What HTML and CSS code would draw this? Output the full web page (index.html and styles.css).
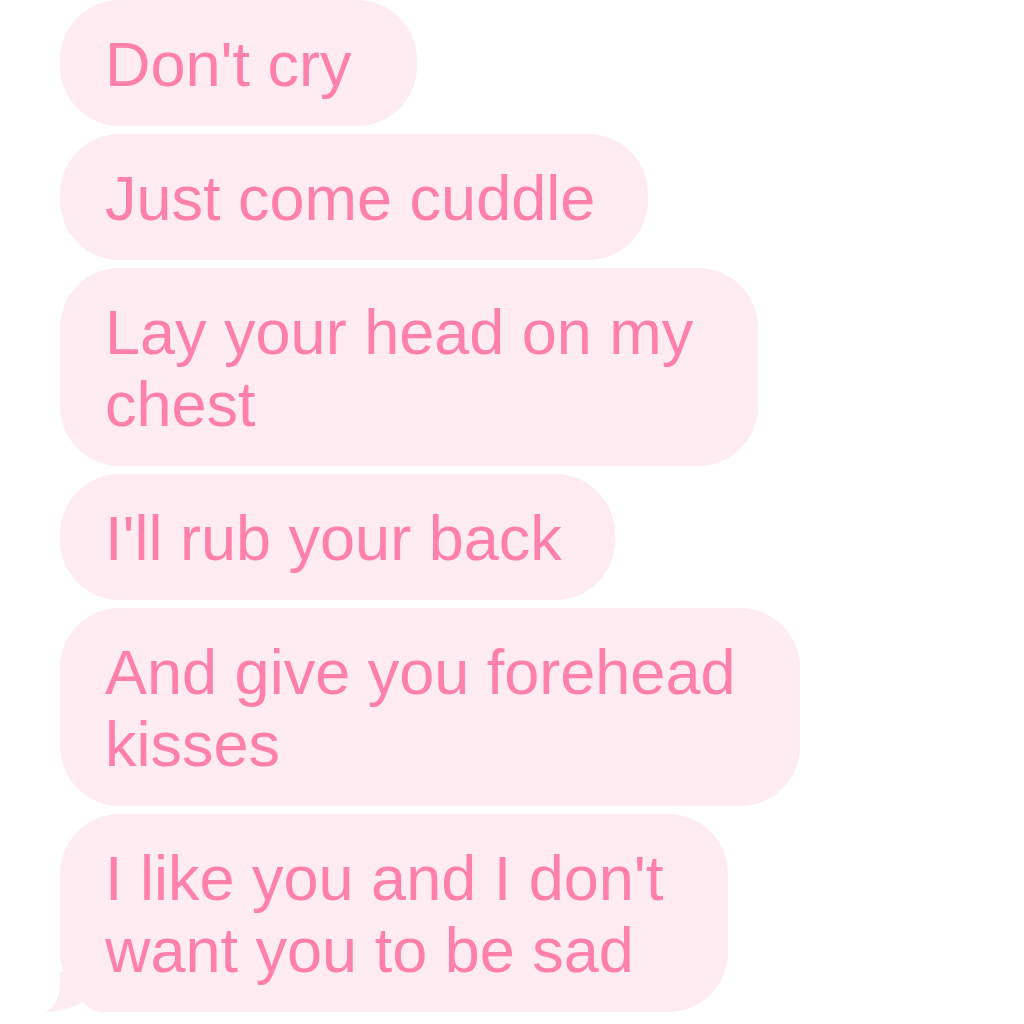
FILE: index.html
```html
<!DOCTYPE html>
<html lang="en">
<head>
<meta charset="utf-8">
<title>Messages</title>
<link rel="stylesheet" href="styles.css">
</head>
<body>
<main class="thread">
  <div class="bubble wide">Don't cry</div>
  <div class="bubble">Just come cuddle</div>
  <div class="bubble wide">Lay your head on my<br>chest</div>
  <div class="bubble">I'll rub your back</div>
  <div class="bubble wide">And give you forehead<br>kisses</div>
  <div class="bubble wide last">I like you and I don't<br>want you to be sad
    <svg class="tail" width="76" height="40" viewBox="0 0 76 40" aria-hidden="true">
      <path d="M16 0 L16 12 C16 26 10 36 1 40 C14 40 28 36 39 30 C44 36 50 39 56 40 L76 40 L76 0 Z"/>
    </svg>
  </div>
</main>
</body>
</html>
```
FILE: styles.css
```css
html, body {
  margin: 0;
  padding: 0;
  background: #ffffff;
}

.thread {
  display: flex;
  flex-direction: column;
  align-items: flex-start;
  gap: 8px;
  padding: 0 0 0 60px;
}

.bubble {
  position: relative;
  background: #ffebf2;
  color: #ff80ab;
  font-family: "Liberation Sans", Arial, Helvetica, sans-serif;
  font-size: 63px;
  line-height: 72px;
  padding: 28px 53px 26px 45px;
  border-radius: 60px;
  white-space: nowrap;
}

.bubble.wide {
  padding-right: 65px;
}

.tail {
  position: absolute;
  left: -16px;
  bottom: 0;
  display: block;
}

.tail path {
  fill: #ffebf2;
}
```
